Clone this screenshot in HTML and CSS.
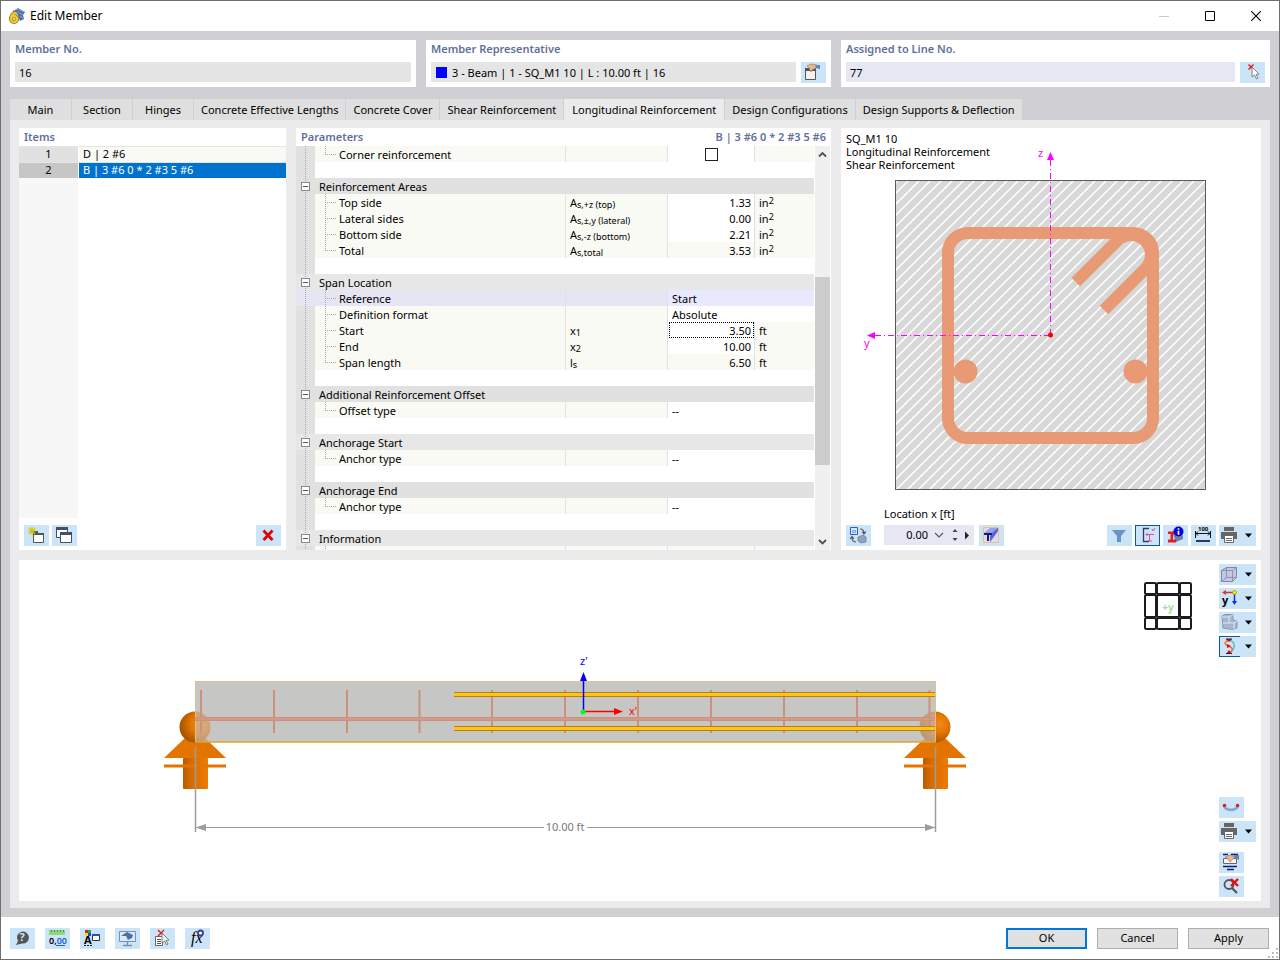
FILE: index.html
```html
<!DOCTYPE html>
<html lang="en">
<head>
    <meta charset="UTF-8">
    <meta name="viewport" content="width=device-width, initial-scale=1.0">
    <title>Edit Member</title>
    <link rel="stylesheet" href="styles.css">
</head>
<body>
<div class="window">
    <header class="titlebar">
        <svg class="app-icon" viewBox="0 0 16 16">
            <path d="M3 4 L9 0 L16 4 L14 7 L15 11 L11 13 L8 5 Z" fill="#4a6fa8"/>
            <path d="M4 3 L9 1 L15 4 M9 4 L14 7 M11 8 L14 10" stroke="#8fa9d0" fill="none"/>
            <circle cx="5" cy="11" r="3" fill="#fff" stroke="#7d6a20" stroke-width="4"/>
            <path d="M2.2 10 C2.2 7 4 5 7.5 5" fill="none" stroke="#7d6a20" stroke-width="3.6"/>
            <circle cx="5" cy="11" r="3" fill="none" stroke="#f4c830" stroke-width="2.6"/>
            <path d="M2.2 10 C2.2 7 4 5 7.5 5" fill="none" stroke="#f4c830" stroke-width="2.4"/>
        </svg>
        <h1>Edit Member</h1>
        <div class="window-controls">
            <button aria-label="Minimize" disabled><svg viewBox="0 0 10 10"><path d="M0 5.5H10" stroke="#c8c8c8"/></svg></button>
            <button aria-label="Maximize"><svg viewBox="0 0 10 10"><path d="M.5 .5H9.5V9.5H.5Z" fill="none" stroke="#000"/></svg></button>
            <button aria-label="Close"><svg viewBox="0 0 10 10"><path d="M0 0L10 10M10 0L0 10" stroke="#000" stroke-width="1.1"/></svg></button>
        </div>
    </header>

    <main class="main">
        <section class="cards">
            <div class="card">
                <label for="memberNo">Member No.</label>
                <div class="field-row">
                    <input class="field" id="memberNo" type="text" value="16" readonly>
                </div>
            </div>
            <div class="card">
                <label for="memberRep">Member Representative</label>
                <div class="field-row">
                    <div class="field swatch-field">
                        <span class="swatch"></span>
                        <input id="memberRep" type="text" value="3 - Beam | 1 - SQ_M1 10 | L : 10.00 ft | 16" readonly>
                    </div>
                    <button class="tool" aria-label="Edit representative">
                        <svg viewBox="0 0 25 21">
                            <path d="M4.5 6.5H14.5V17.5H4.5Z" fill="#f2f2f2" stroke="#555"/>
                            <path d="M4 6H15V9H4Z" fill="#555"/>
                            <path d="M6 4 L10 2 L16 3 L15 6 L11 8 L10 10 L8 6 Z" fill="#e3b98c" stroke="#9a7550" stroke-width=".6"/>
                            <path d="M14 3H19V7L15 6Z" fill="#5c89bb"/>
                        </svg>
                    </button>
                </div>
            </div>
            <div class="card">
                <label for="lineNo">Assigned to Line No.</label>
                <div class="field-row">
                    <input class="field editable" id="lineNo" type="text" value="77">
                    <button class="tool" aria-label="Select line">
                        <svg viewBox="0 0 25 21">
                            <path d="M8.5 2.5L13.5 7.5M13.5 2.5L8.5 7.5" stroke="#e01818" stroke-width="1.4"/>
                            <path d="M12 5 V15 L14.5 13 L16.5 17 L18 16 L16 12.5 L19 12 Z" fill="#fff" stroke="#777" stroke-width=".9"/>
                        </svg>
                    </button>
                </div>
            </div>
        </section>

        <nav class="tabs" role="tablist">
            <button role="tab">Main</button>
            <button role="tab">Section</button>
            <button role="tab">Hinges</button>
            <button role="tab">Concrete Effective Lengths</button>
            <button role="tab">Concrete Cover</button>
            <button role="tab">Shear Reinforcement</button>
            <button role="tab" class="active" aria-selected="true">Longitudinal Reinforcement</button>
            <button role="tab">Design Configurations</button>
            <button role="tab">Design Supports &amp; Deflection</button>
        </nav>

        <div class="content">
            <div class="panels">
                <section class="panel items">
                    <h2>Items</h2>
                    <div class="items-list">
                        <table>
                            <tr><th>1</th><td>D | 2 #6</td></tr>
                            <tr class="selected"><th>2</th><td>B | 3 #6 0 * 2 #3 5 #6</td></tr>
                        </table>
                    </div>
                    <div class="toolbar">
                        <button class="tool" aria-label="New item">
                            <svg viewBox="0 0 25 21">
                                <path d="M9.5 8.5H19.5V17.5H9.5Z" fill="#fff" stroke="#555"/>
                                <path d="M9 6H14V9H9ZM15 8H20V10H9V8Z" fill="#555"/>
                                <path d="M8 2V10M4 6H12M5 3L11 9M11 3L5 9" stroke="#d9c400" stroke-width="1.2"/>
                            </svg>
                        </button>
                        <button class="tool" aria-label="Copy item">
                            <svg viewBox="0 0 25 21">
                                <path d="M4.5 2.5H15.5V12.5H4.5Z" fill="#fff" stroke="#44506a"/>
                                <path d="M4 2H16V5H4Z" fill="#44506a"/>
                                <path d="M8.5 7.5H19.5V17.5H8.5Z" fill="#fff" stroke="#44506a"/>
                                <path d="M8 7H20V10H8Z" fill="#44506a"/>
                            </svg>
                        </button>
                        <button class="tool push" aria-label="Delete item">
                            <svg viewBox="0 0 25 21"><path d="M7.5 5.5L16.5 15M16.5 5.5L7.5 15" stroke="#e60000" stroke-width="2.8"/></svg>
                        </button>
                    </div>
                </section>

                <section class="panel params">
                    <div class="params-head">
                        <h2>Parameters</h2>
                        <h2>B | 3 #6 0 * 2 #3 5 #6</h2>
                    </div>
                    <div class="params-body">
                        <div class="tree">
                            <table>
                                <colgroup><col class="c-gutter"><col><col class="c-symbol"><col class="c-value"><col class="c-unit"></colgroup>
                                <tr><td class="gutter"></td><td class="name last"><label for="corner">Corner reinforcement</label></td><td></td><td class="value edit check"><input id="corner" type="checkbox"></td><td></td></tr>
                                <tr class="gap"><td class="gutter"></td><td colspan="4"></td></tr>
                                <tr class="group"><td class="gutter"><button class="toggle" aria-label="Collapse"></button></td><td colspan="4">Reinforcement Areas</td></tr>
                                <tr><td class="gutter"></td><td class="name">Top side</td><td>A<sub>s,+z (top)</sub></td><td class="value edit">1.33</td><td>in<sup>2</sup></td></tr>
                                <tr><td class="gutter"></td><td class="name">Lateral sides</td><td>A<sub>s,±,y (lateral)</sub></td><td class="value edit">0.00</td><td>in<sup>2</sup></td></tr>
                                <tr><td class="gutter"></td><td class="name">Bottom side</td><td>A<sub>s,-z (bottom)</sub></td><td class="value edit">2.21</td><td>in<sup>2</sup></td></tr>
                                <tr><td class="gutter"></td><td class="name last">Total</td><td>A<sub>s,total</sub></td><td class="value">3.53</td><td>in<sup>2</sup></td></tr>
                                <tr class="gap"><td class="gutter"></td><td colspan="4"></td></tr>
                                <tr class="group current"><td class="gutter"><button class="toggle" aria-label="Collapse"></button></td><td colspan="4">Span Location</td></tr>
                                <tr class="highlight"><td class="gutter"></td><td class="name">Reference</td><td></td><td class="text" colspan="2">Start</td></tr>
                                <tr><td class="gutter"></td><td class="name">Definition format</td><td></td><td class="text" colspan="2">Absolute</td></tr>
                                <tr><td class="gutter"></td><td class="name"><label for="x1">Start</label></td><td>x<sub>1</sub></td><td class="value edit"><input class="cell-input" id="x1" type="text" value="3.50"></td><td>ft</td></tr>
                                <tr><td class="gutter"></td><td class="name">End</td><td>x<sub>2</sub></td><td class="value edit">10.00</td><td>ft</td></tr>
                                <tr><td class="gutter"></td><td class="name last">Span length</td><td>l<sub>s</sub></td><td class="value">6.50</td><td>ft</td></tr>
                                <tr class="gap"><td class="gutter"></td><td colspan="4"></td></tr>
                                <tr class="group"><td class="gutter"><button class="toggle" aria-label="Collapse"></button></td><td colspan="4">Additional Reinforcement Offset</td></tr>
                                <tr><td class="gutter"></td><td class="name last">Offset type</td><td></td><td class="text" colspan="2">--</td></tr>
                                <tr class="gap"><td class="gutter"></td><td colspan="4"></td></tr>
                                <tr class="group current"><td class="gutter"><button class="toggle" aria-label="Collapse"></button></td><td colspan="4">Anchorage Start</td></tr>
                                <tr><td class="gutter"></td><td class="name last">Anchor type</td><td></td><td class="text" colspan="2">--</td></tr>
                                <tr class="gap"><td class="gutter"></td><td colspan="4"></td></tr>
                                <tr class="group"><td class="gutter"><button class="toggle" aria-label="Collapse"></button></td><td colspan="4">Anchorage End</td></tr>
                                <tr><td class="gutter"></td><td class="name last">Anchor type</td><td></td><td class="text" colspan="2">--</td></tr>
                                <tr class="gap"><td class="gutter"></td><td colspan="4"></td></tr>
                                <tr class="group current"><td class="gutter"><button class="toggle" aria-label="Collapse"></button></td><td colspan="4">Information</td></tr>
                                <tr><td class="gutter"></td><td class="name"></td><td></td><td class="value"></td><td></td></tr>
                            </table>
                        </div>
                        <div class="scrollbar">
                            <button aria-label="Scroll up"><svg viewBox="0 0 15 16"><path d="M4 10.5L7.5 7L11 10.5" fill="none" stroke="#505050" stroke-width="1.8"/></svg></button>
                            <div class="track-before"></div>
                            <div class="thumb"></div>
                            <div class="track-after"></div>
                            <button aria-label="Scroll down"><svg viewBox="0 0 15 16"><path d="M4 6L7.5 9.5L11 6" fill="none" stroke="#505050" stroke-width="1.8"/></svg></button>
                        </div>
                    </div>
                </section>

                <section class="panel section-view">
                    <p class="section-info">SQ_M1 10<br>Longitudinal Reinforcement<br>Shear Reinforcement</p>
                    <svg class="section-drawing" viewBox="841 128 420 372">
                        <defs>
                            <pattern id="hatch" width="11" height="11" patternUnits="userSpaceOnUse">
                                <path d="M-2 13L13 -2M-2 2L2 -2M9 13L13 9" stroke="#fff" stroke-width="1.5"/>
                            </pattern>
                        </defs>
                        <rect x="895.5" y="180.5" width="310" height="309" fill="#d8d8d8"/>
                        <rect x="895.5" y="180.5" width="310" height="309" fill="url(#hatch)" stroke="#5a5a5a"/>
                        <g fill="none" stroke="#e89a75" stroke-width="12">
                            <rect x="948" y="233" width="205" height="205" rx="20"/>
                            <path d="M1075.7 282L1119 239A20 20 0 0 1 1147 267L1104 310"/>
                        </g>
                        <circle cx="965.5" cy="371.5" r="12" fill="#e89a75"/>
                        <circle cx="1135.5" cy="371.5" r="12" fill="#e89a75"/>
                        <g stroke="#ff00ff" fill="none">
                            <path d="M1050.5 335V158" stroke-dasharray="6 3 1 3"/>
                            <path d="M1050 335.5H875" stroke-dasharray="6 3 1 3"/>
                        </g>
                        <path d="M1050.5 152L1054 160H1047ZM867 335.5L875 332V339Z" fill="#ff00ff"/>
                        <circle cx="1050.5" cy="335" r="2.5" fill="#f00"/>
                        <g class="axis-label" fill="#ff00ff">
                            <text x="1038" y="157">z</text>
                            <text x="864" y="347">y</text>
                        </g>
                    </svg>
                    <div class="toolbar location-bar">
                        <button class="tool" aria-label="Switch view">
                            <svg viewBox="0 0 25 21">
                                <path d="M4.5 2.5H11.5V9.5H4.5Z" fill="#dce8ff" stroke="#2a5fd0"/>
                                <path d="M6.5 5.5H9.5V7.5H6.5Z" fill="none" stroke="#7aa0e8"/>
                                <path d="M12 12L17 10L20 12V17L15 18L12 16Z" fill="#8fa3c4" stroke="#66799c" stroke-width=".7"/>
                                <path d="M14 4C17 4 18 5 18 8M16 6.5L18 9L20 6.5M10 17C7 17 6 15 6 12.5M4 14L6 11.5L8 14" fill="none" stroke="#555" stroke-width="1.1"/>
                            </svg>
                        </button>
                        <div class="location">
                            <label for="location">Location x [ft]</label>
                            <div class="spin">
                                <input id="location" type="text" value="0.00">
                                <button aria-label="Open list"><svg viewBox="0 0 10 20"><path d="M1 8L5 12L9 8" fill="none" stroke="#555" stroke-width="1.1"/></svg></button>
                                <button aria-label="Step"><svg viewBox="0 0 10 20"><path d="M2.5 7L5 4L7.5 7ZM2.5 13L5 16L7.5 13Z" fill="#444"/></svg></button>
                                <button aria-label="Next"><svg viewBox="0 0 10 20"><path d="M3 6.5V14.5L7 10.5Z" fill="#222"/></svg></button>
                            </div>
                        </div>
                        <button class="tool" aria-label="Section display">
                            <svg viewBox="0 0 25 21">
                                <path d="M4.5 2.5H19.5V17.5H4.5Z" fill="#dcdcea" stroke="#eebf80"/>
                                <path d="M5 8L11 3H19V6L11 17V10Z" fill="#9a9fee"/>
                                <path d="M13 8L19 3V6L11 17V10Z" fill="#5b62d8"/>
                                <path d="M5 8H13V10H10V16H8V10H5Z" fill="#191970"/>
                            </svg>
                        </button>
                        <div class="tool-group push">
                            <button class="tool" aria-label="Filter">
                                <svg viewBox="0 0 25 21"><path d="M5 5H19L14 11V17H10V11Z" fill="#6a93c8"/></svg>
                            </button>
                            <button class="tool pressed" aria-label="Axes">
                                <svg viewBox="0 0 25 21">
                                    <path d="M14 3.5H8.5V16.5H14" fill="none" stroke="#333a70" stroke-width="1.3"/>
                                    <path d="M19 9.5H11M14.5 9V16M12.5 8L11 9.5L12.5 11M17 4L18 6L20 3M14 16H17" fill="none" stroke="#e0508c"/>
                                </svg>
                            </button>
                            <button class="tool" aria-label="Information">
                                <svg viewBox="0 0 25 21">
                                    <path d="M9 7L15 4L20 11V14L13 17Z" fill="#6f7fa8"/>
                                    <path d="M5 6.5H12V9H10V14.5H13V17.5H5V14.5H7.5V9H5Z" fill="#e02020"/>
                                    <circle cx="15.5" cy="6.5" r="5" fill="#0000e0"/>
                                    <path d="M15.5 3.2V4.7M15.5 5.8V9.8" stroke="#fff" stroke-width="1.7"/>
                                </svg>
                            </button>
                            <button class="tool" aria-label="Dimensions">
                                <svg viewBox="0 0 25 21">
                                    <path d="M4.5 6V13M19.5 6V13M5 8.5H19M7 6.5L5 8.5L7 10.5M17 6.5L19 8.5L17 10.5" fill="none" stroke="#111"/>
                                    <path d="M5 15H19V17H5Z" fill="#30365e"/>
                                    <text x="7" y="6" class="tiny">100</text>
                                </svg>
                            </button>
                            <button class="tool wide" aria-label="Print">
                                <svg viewBox="0 0 37 21">
                                    <path d="M5 2H15V6H5Z" fill="#666"/><path d="M2 7H18V14H2Z" fill="#666"/>
                                    <path d="M5.5 10.5H14.5V17.5H5.5Z" fill="#fff" stroke="#666"/><path d="M7 13.5H13M7 15.5H13" stroke="#666"/>
                                    <path d="M26 8.5H33L29.5 12.5Z" fill="#000"/>
                                </svg>
                            </button>
                        </div>
                    </div>
                </section>
            </div>

            <section class="panel viewer">
                <svg class="model" viewBox="19 560 1195 341">
                    <defs>
                        <linearGradient id="shaft">
                            <stop offset="0" stop-color="#b85a00"/><stop offset=".35" stop-color="#d96c00"/><stop offset="1" stop-color="#ee7b04"/>
                        </linearGradient>
                        <radialGradient id="ball" cx=".65" cy=".4" r=".7">
                            <stop offset="0" stop-color="#ef8a1c"/><stop offset=".4" stop-color="#e67600"/><stop offset="1" stop-color="#9c4d00"/>
                        </radialGradient>
                        <g id="support">
                            <path d="M-31 58L-10 38H10L31 58Z" fill="#e37400"/>
                            <rect x="-12" y="58" width="25" height="31" rx="1" fill="url(#shaft)"/>
                            <path d="M-31 66H31" stroke="#e37400" stroke-width="3"/>
                            <circle cx="0" cy="27" r="15.5" fill="url(#ball)"/>
                        </g>
                    </defs>
                    <!-- beam body behind and in front of the supports -->
                    <rect x="195" y="681" width="741" height="61" fill="#c6c6c5"/>
                    <use href="#support" x="195" y="700"/>
                    <use href="#support" x="935" y="700"/>
                    <rect x="195" y="681" width="741" height="61" fill="#c6c6c5" fill-opacity=".6"/>
                    <path d="M195.5 742V681.5H935.5V742" fill="none" stroke="#e3c08a"/>
                    <path d="M195 742H936" stroke="#dfa52c" stroke-width="1.5"/>
                    <!-- stirrups -->
                    <path d="M201 690V733M274 690V733M347 690V733M419.5 690V733M492 690V733M565 690V733M638 690V733M711 690V733M784 690V733M857 690V733M929.5 690V733" stroke="#cd917b" stroke-width="2"/>
                    <path d="M195 719H935" stroke="#cb917d" stroke-width="4"/>
                    <path d="M195 719H935" stroke="#d19a86" stroke-width="2"/>
                    <!-- selected bars -->
                    <path d="M454 694.5H935M454 728.5H935" stroke="#b9800c" stroke-width="5"/>
                    <path d="M454 694.5H935M454 728.5H935" stroke="#ffc41a" stroke-width="3"/>
                    <path d="M583.5 711V680" stroke="#0000ff" stroke-width="1.5"/>
                    <path d="M583.5 672L587 681H580Z" fill="#0000ff"/>
                    <path d="M584 711.5H616" stroke="#ff0000" stroke-width="1.5"/>
                    <path d="M623 711.5L614 708V715Z" fill="#ff0000"/>
                    <circle cx="583" cy="712" r="2.5" fill="#00ff20"/>
                    <g class="axis-label">
                        <text x="580" y="665" fill="#0000ff">z'</text>
                        <text x="629" y="715" fill="#ff0000">x'</text>
                    </g>
                    <g stroke="#9c9ca0" fill="#9c9ca0">
                        <path d="M195.5 747V832M935.5 747V832" stroke-width="1.5"/>
                        <path d="M196 827.5H544M587 827.5H935"/>
                        <path d="M195.5 827.5L206 824V831ZM935.5 827.5L925 824V831Z" stroke="none"/>
                    </g>
                    <text class="dimension" x="565" y="831" text-anchor="middle">10.00 ft</text>
                    <!-- navigation cube -->
                    <g fill="none" stroke="#1c1c1c" stroke-width="2">
                        <rect x="1145" y="583" width="11" height="11" rx="1.5"/>
                        <rect x="1157" y="583" width="22" height="11" rx="1.5"/>
                        <rect x="1180" y="583" width="11" height="11" rx="1.5"/>
                        <rect x="1145" y="595" width="11" height="22" rx="1.5"/>
                        <rect x="1157" y="595" width="22" height="22" rx="1.5"/>
                        <rect x="1180" y="595" width="11" height="22" rx="1.5"/>
                        <rect x="1145" y="618" width="11" height="11" rx="1.5"/>
                        <rect x="1157" y="618" width="22" height="11" rx="1.5"/>
                        <rect x="1180" y="618" width="11" height="11" rx="1.5"/>
                    </g>
                    <text class="cube-label" x="1168" y="611" text-anchor="middle">+y</text>
                </svg>
                <div class="side-toolbar">
                    <button class="tool wide" aria-label="View cube">
                        <svg viewBox="0 0 37 21">
                            <path d="M2.5 6.5L7.5 3.5H17.5V13.5L13.5 17.5H2.5Z" fill="#c3c8df" stroke="#8087a8"/>
                            <path d="M2.5 6.5H13.5V17.5M13.5 6.5L17.5 3.5M7.5 3.5V13.5H17.5M7.5 13.5L2.5 17.5" fill="none" stroke="#8087a8" stroke-width=".8"/>
                            <path d="M26 8.5H33L29.5 12.5Z" fill="#000"/>
                        </svg>
                    </button>
                    <button class="tool wide" aria-label="View direction">
                        <svg viewBox="0 0 37 21">
                            <path d="M14 4.5H6" stroke="#d04020" stroke-width="1.5"/>
                            <path d="M15.5 6V14" stroke="#1030e0" stroke-width="1.5"/>
                            <path d="M3 4.5L7 2V7Z" fill="#d04020"/><path d="M15.5 17L13 13H18Z" fill="#1030e0"/>
                            <circle cx="15.5" cy="4.5" r="2" fill="#f0f000" stroke="#888800" stroke-width=".6"/>
                            <text x="3" y="16" class="glyph">y</text>
                            <path d="M26 8.5H33L29.5 12.5Z" fill="#000"/>
                        </svg>
                    </button>
                    <button class="tool wide" aria-label="Rendering">
                        <svg viewBox="0 0 37 21">
                            <path d="M3 4L6 2.5H14V8L18 9V16L13 17.5L4 16Z" fill="#a7b4d2" stroke="#7d8bac" stroke-width=".8"/>
                            <path d="M3 5H10L14 3M10 5V11H4M10 11H15L18 9M15 11V17" stroke="#e0e6f4" fill="none"/>
                            <path d="M26 8.5H33L29.5 12.5Z" fill="#000"/>
                        </svg>
                    </button>
                    <button class="tool wide half-pressed" aria-label="Results">
                        <svg viewBox="0 0 37 21">
                            <path d="M10 4C17 6 17 13 10 17" fill="none" stroke="#58c4c0" stroke-width="1.5"/>
                            <path d="M10 4C5 6 5 8 9 10C15 12 14 15 10 17" fill="none" stroke="#f07040" stroke-width="1.5"/>
                            <path d="M7 3H13L10 6ZM8 8L12 10L8 12ZM7 18H13L10 14Z" fill="#d01010"/><path d="M7 3H13M7 17.5H13" stroke="#222"/>
                            <path d="M26 8.5H33L29.5 12.5Z" fill="#000"/>
                        </svg>
                    </button>
                    <div class="side-bottom">
                        <button class="tool" aria-label="Deformation">
                            <svg viewBox="0 0 25 21">
                                <path d="M5 9C7 14 17 14 19 9" fill="none" stroke="#8ab4e0" stroke-width="3"/>
                                <path d="M5 9C7 14 17 14 19 9" fill="none" stroke="#5e7898" stroke-dasharray="1 2"/>
                                <circle cx="5.5" cy="8.5" r="1.8" fill="#e02020"/><circle cx="18.5" cy="8.5" r="1.8" fill="#e02020"/>
                            </svg>
                        </button>
                        <button class="tool wide" aria-label="Print view">
                            <svg viewBox="0 0 37 21">
                                <path d="M5 2H15V6H5Z" fill="#666"/><path d="M2 7H18V14H2Z" fill="#666"/>
                                <path d="M5.5 10.5H14.5V17.5H5.5Z" fill="#fff" stroke="#666"/><path d="M7 13.5H13M7 15.5H13" stroke="#666"/>
                                <path d="M26 8.5H33L29.5 12.5Z" fill="#000"/>
                            </svg>
                        </button>
                        <button class="tool spaced" aria-label="Display settings">
                            <svg viewBox="0 0 25 21">
                                <path d="M4 2.5H9M12 2.5H19M4 14.5H18M8 17.5H15" stroke="#101a80" stroke-width="1.4"/>
                                <path d="M4.5 6.5H17.5V11.5H4.5Z" fill="#f4f4f4" stroke="#666"/>
                                <path d="M6 5L11 3L16 5L13 8L11 10L9 7Z" fill="#e3b98c" stroke="#9a7550" stroke-width=".6"/>
                                <path d="M15 3H20V8L16 6Z" fill="#5c89bb"/>
                            </svg>
                        </button>
                        <button class="tool" aria-label="Reset zoom">
                            <svg viewBox="0 0 25 21">
                                <circle cx="10" cy="8.5" r="4.5" fill="none" stroke="#555" stroke-width="1.8"/>
                                <path d="M13 12L18 17" stroke="#555" stroke-width="2.2"/>
                                <path d="M12 3L19 10M19 3L12 10" stroke="#e01010" stroke-width="2.4"/>
                            </svg>
                        </button>
                    </div>
                </div>
            </section>
        </div>
    </main>

    <footer class="footer">
        <div class="footer-tools">
            <button class="tool" aria-label="Help">
                <svg viewBox="0 0 25 21">
                    <path d="M6 17L8 13A6 6 0 1 1 12 15.5Z" fill="#555"/>
                    <text x="12" y="13" class="glyph help">?</text>
                </svg>
            </button>
            <button class="tool" aria-label="Units">
                <svg viewBox="0 0 25 21">
                    <path d="M4 2H20V7H4Z" fill="#8fd87c"/><path d="M6.5 2V4M9.5 2V4M12.5 2V4M15.5 2V4M18.5 2V4" stroke="#3b9b40"/>
                    <text x="4" y="16" class="digits">0,<tspan fill="#2060d8">00</tspan></text>
                    <path d="M11 17.5H20" stroke="#2060d8"/>
                </svg>
            </button>
            <button class="tool" aria-label="Colors">
                <svg viewBox="0 0 25 21">
                    <path d="M5 2H8V5H5Z" fill="#e02020"/><path d="M8 2H11V5H8Z" fill="#20b030"/><path d="M5 5H8V8H5Z" fill="#f0e020"/><path d="M8 5H11V8H8Z" fill="#2040e0"/>
                    <text x="4" y="16" class="glyph">A</text>
                    <path d="M12.5 6.5H19.5V12.5H12.5Z" fill="#fff" stroke="#333"/><path d="M12 6H20V8H12Z" fill="#2a4fb0"/><path d="M4 17.5H13" stroke="#222" stroke-dasharray="2 1"/>
                </svg>
            </button>
            <button class="tool" aria-label="Display">
                <svg viewBox="0 0 25 21">
                    <path d="M4.5 3.5H20.5V13.5H4.5Z" fill="#dce9f6" stroke="#7790ad"/>
                    <path d="M6 8L12 4L18 7L17 10L13 12L11 8Z" fill="#49729f"/><path d="M12.5 14V17M8 17.5H17" stroke="#7790ad" stroke-width="1.4"/>
                </svg>
            </button>
            <button class="tool" aria-label="Select object">
                <svg viewBox="0 0 25 21">
                    <path d="M5.5 8.5H12.5V17.5H5.5Z" fill="#fff" stroke="#666"/><path d="M7 11.5H11M7 13.5H11M7 15.5H11" stroke="#555"/>
                    <path d="M8 2L14 8M14 2L8 8" stroke="#e01818" stroke-width="1.3"/>
                    <path d="M12 5V15L14.5 13L16.5 17L18 16L16 12.5L19 12Z" fill="#eee" stroke="#777" stroke-width=".9"/>
                </svg>
            </button>
            <button class="tool" aria-label="Formula">
                <svg viewBox="0 0 25 21">
                    <text x="6" y="15" class="formula">fx</text>
                    <circle cx="15.5" cy="5" r="2.5" fill="#fff" stroke="#3a3f8c" stroke-width="1.8"/>
                </svg>
            </button>
        </div>
        <div class="footer-actions">
            <button class="btn default">OK</button>
            <button class="btn">Cancel</button>
            <button class="btn">Apply</button>
        </div>
        <svg class="grip" viewBox="0 0 10 10"><path d="M8 0H10V2H8ZM8 4H10V6H8ZM8 8H10V10H8ZM4 4H6V6H4ZM4 8H6V10H4ZM0 8H2V10H0Z" fill="#bdbdbd"/></svg>
    </footer>
</div>
</body>
</html>
```
FILE: styles.css
```css
* {
    box-sizing: border-box;
}
body {
    margin: 0;
    font-family: "Noto Sans", "Open Sans", sans-serif;
    font-size: 11px;
    line-height: 16px;
    color: #000;
}
button,
input {
    font: inherit;
    color: inherit;
    border: none;
    border-radius: 0;
    padding: 0;
    margin: 0;
    background: none;
}
svg {
    display: block;
}
h1,
h2,
p {
    margin: 0;
    font-size: inherit;
}
.window {
    display: flex;
    flex-direction: column;
    min-height: 100vh;
    border: 1px solid #6e6e6e;
    background: #fff;
}

/* title bar */
.titlebar {
    display: flex;
    align-items: center;
    height: 30px;
    padding-left: 8px;
    gap: 5px;
}
.titlebar h1 {
    font-size: 12px;
    font-weight: 400;
}
.app-icon {
    width: 16px;
    height: 16px;
}
.window-controls {
    display: flex;
    margin-left: auto;
}
.window-controls button {
    display: flex;
    align-items: center;
    justify-content: center;
    width: 46px;
    height: 30px;
}
.window-controls svg {
    width: 10px;
    height: 10px;
}

.main {
    flex: 1;
    display: flex;
    flex-direction: column;
    padding: 9px;
    background: #d0cfd4;
}

/* top cards */
.cards {
    display: grid;
    grid-template-columns: 406fr 405fr 429fr;
    gap: 10px;
    margin-bottom: 12px;
}
.card {
    padding: 1px 5px 4px;
    background: #fff;
}
.card label,
.panel h2 {
    font-weight: 600;
    color: #5f709a;
}
.card label {
    display: block;
    margin-bottom: 5px;
}
.field-row {
    display: flex;
    gap: 5px;
    height: 21px;
}
.field {
    flex: 1;
    min-width: 0;
    height: 20px;
    padding: 0 4px;
    background: #e5e5e5;
}
.field.editable {
    background: #e7e7f3;
}
.swatch-field {
    display: flex;
    align-items: center;
    gap: 5px;
}
.swatch-field input {
    flex: 1;
    height: 20px;
}
.swatch {
    width: 11px;
    height: 11px;
    margin-left: 1px;
    background: #0000ff;
}
.tool {
    flex: none;
    width: 25px;
    height: 21px;
    background: #cce4f7;
}
.tool svg {
    width: 100%;
    height: 100%;
}
.tool.wide {
    width: 37px;
}
.tool.pressed {
    outline: 1px solid #0a5a9c;
    outline-offset: -1px;
}
.push {
    margin-left: auto;
}

/* tabs */
.tabs {
    display: flex;
    height: 21px;
}
.tabs button {
    min-width: 61px;
    padding: 0 7px;
    background: #dfdfdf;
    border-right: 1px solid #d0cfd4;
    white-space: nowrap;
}
.tabs button:first-child {
    min-width: 62px;
}
.tabs button.active {
    padding: 0 8px;
    background: #ebebeb;
}
.content {
    flex: 1;
    display: flex;
    flex-direction: column;
    gap: 10px;
    padding: 8px 9px 7px;
    background: #ebebeb;
}
.panels {
    display: grid;
    grid-template-columns: 267fr 535fr 420fr;
    gap: 10px;
}
.panel {
    display: flex;
    flex-direction: column;
    min-width: 0;
    background: #fff;
}
.panel h2 {
    height: 18px;
    line-height: 18px;
    padding: 0 5px;
}
.toolbar {
    display: flex;
    align-items: flex-end;
    gap: 3px;
    padding: 7px 5px 4px;
}

/* items */
.items-list {
    flex: 1;
    background: linear-gradient(to right, #f7f7f7 59px, #fff 59px);
}
.items table,
.tree table {
    width: 100%;
    border-collapse: separate;
    border-spacing: 0;
    table-layout: fixed;
}
.items th,
.items td {
    height: 16px;
    line-height: 13px;
    padding: 0 0 2px;
    border-top: 1px solid #e5e5e5;
}
.items th {
    width: 60px;
    font-weight: 400;
    background: #e1e1e1;
    border-right: 1px solid #fff;
}
.items td {
    padding-left: 4px;
    background: #f9faf4;
}
.items .selected th {
    background: #c6c6c6;
}
.items .selected td {
    background: #0073cf;
    color: #fff;
}

/* parameters */
.params-head {
    display: flex;
    justify-content: space-between;
}
.params-body {
    display: flex;
    height: 404px;
}
.tree {
    flex: 1;
    overflow: hidden;
}
.c-gutter {
    width: 19px;
}
.c-symbol {
    width: 102px;
}
.c-value {
    width: 87px;
}
.c-unit {
    width: 60px;
}
.tree td {
    height: 16px;
    padding: 2px 4px 0;
    line-height: 14px;
    background: #f9faf4;
    border-right: 1px solid #e1e1e1;
    white-space: nowrap;
}
.tree td:last-child {
    border-right-color: #fff;
}
.tree td.gutter {
    padding: 0 0 0 5px;
    border: none;
    background: repeating-linear-gradient(to bottom, #aaa 0 1px, transparent 1px 2px) 9px 0 / 1px 100% no-repeat, #e1e1e1;
}
.tree .group td {
    background-color: #e1e1e1;
}
.tree .group.current td {
    background-color: #e7e7e7;
}
.tree .gap td:last-child,
.tree td.edit,
.tree td.text {
    background: #fff;
}
.tree .highlight td {
    background-color: #e5e5f3;
}
.tree .highlight td.text {
    background-color: #e8e8ff;
}
.tree td.name {
    padding-left: 24px;
    background-image:
        repeating-linear-gradient(to bottom, #aaa 0 1px, transparent 1px 2px),
        repeating-linear-gradient(to right, #aaa 0 1px, transparent 1px 2px);
    background-position: 10px 0, 10px 8px;
    background-size: 1px 100%, 12px 1px;
    background-repeat: no-repeat;
}
.tree td.name.last {
    background-size: 1px 9px, 12px 1px;
}
.tree td.value {
    padding-right: 3px;
    text-align: right;
}
.tree td.check {
    padding-top: 0;
}
.tree sub,
.tree sup {
    font-size: 9px;
    line-height: 1px;
}
.tree sub {
    vertical-align: -1px;
}
.tree sup {
    vertical-align: 3px;
}
.toggle {
    display: block;
    width: 9px;
    height: 9px;
    border: 1px solid #888;
    background: linear-gradient(#555, #555) center / 5px 1px no-repeat, #fff;
}
.check input {
    display: block;
    appearance: none;
    width: 13px;
    height: 13px;
    margin: 0 auto;
    border: 1px solid #222;
    background: #fff;
}
.cell-input {
    display: block;
    width: 100%;
    height: 16px;
    padding: 1px 2px 0 0;
    border: 1px dotted #000;
    text-align: right;
}
.tree td:has(.cell-input) {
    padding: 0 0 0 1px;
}
.scrollbar {
    display: flex;
    flex-direction: column;
    width: 16px;
    border-right: 1px solid #fff;
    background: #f0f0f0;
}
.scrollbar button {
    height: 16px;
}
.track-before {
    flex: 115;
}
.thumb {
    flex: 188;
    background: #cdcdcd;
}
.track-after {
    flex: 69;
}

/* section drawing */
.section-view {
    position: relative;
}
.section-info {
    position: absolute;
    top: 4px;
    left: 5px;
    line-height: 13px;
}
.section-drawing {
    width: 100%;
    height: 372px;
}
.axis-label {
    font-size: 11px;
}
.location-bar {
    flex: 1;
    gap: 5px;
    padding-top: 0;
}
.location {
    margin-left: 8px;
}
.location label {
    display: block;
    margin-bottom: 3px;
}
.spin {
    display: flex;
    width: 90px;
    height: 20px;
    margin-bottom: 1px;
    background: #e7e7f3;
}
.spin input {
    flex: 1;
    min-width: 0;
    padding-right: 6px;
    text-align: right;
}
.spin button {
    width: 10px;
    margin-right: 6px;
}
.spin button + button {
    margin-right: 2px;
}
.tool-group {
    display: flex;
    gap: 3px;
}
.tiny {
    font-size: 6px;
    font-weight: 700;
}
.glyph {
    font-size: 11px;
    font-weight: 700;
}
.help {
    fill: #cce4f7;
    text-anchor: middle;
}
.digits {
    font-size: 9px;
    font-weight: 600;
}
.formula {
    font-family: "Liberation Serif", serif;
    font-size: 16px;
    font-style: italic;
}

/* 3D view */
.viewer {
    flex: 1;
    flex-direction: row;
    min-height: 341px;
}
.model {
    flex: 1;
    min-width: 0;
    height: 341px;
}
.dimension {
    font-size: 11px;
    fill: #777;
}
.cube-label {
    font-size: 10px;
    font-weight: 700;
    fill: #a5dca5;
}
.side-toolbar {
    display: flex;
    flex-direction: column;
    gap: 3px;
    padding: 4px 5px;
}
.half-pressed {
    background:
        linear-gradient(#0a5a9c, #0a5a9c) 0 0 / 21px 1px no-repeat,
        linear-gradient(#0a5a9c, #0a5a9c) 0 100% / 21px 1px no-repeat,
        linear-gradient(#0a5a9c, #0a5a9c) 0 0 / 1px 100% no-repeat,
        #cce4f7;
}
.side-bottom {
    display: flex;
    flex-direction: column;
    gap: 3px;
    margin-top: auto;
}
.side-bottom .spaced {
    margin-top: 7px;
}

/* footer */
.footer {
    position: relative;
    display: flex;
    align-items: center;
    justify-content: space-between;
    height: 42px;
    padding: 0 10px 0 9px;
}
.footer-tools,
.footer-actions {
    display: flex;
    gap: 10px;
}
.btn {
    width: 81px;
    height: 21px;
    border: 1px solid #adadad;
    background: #e1e1e1;
}
.btn.default {
    border: 2px solid #0078d7;
}
.grip {
    position: absolute;
    right: 1px;
    bottom: 1px;
    width: 10px;
    height: 10px;
}
```
